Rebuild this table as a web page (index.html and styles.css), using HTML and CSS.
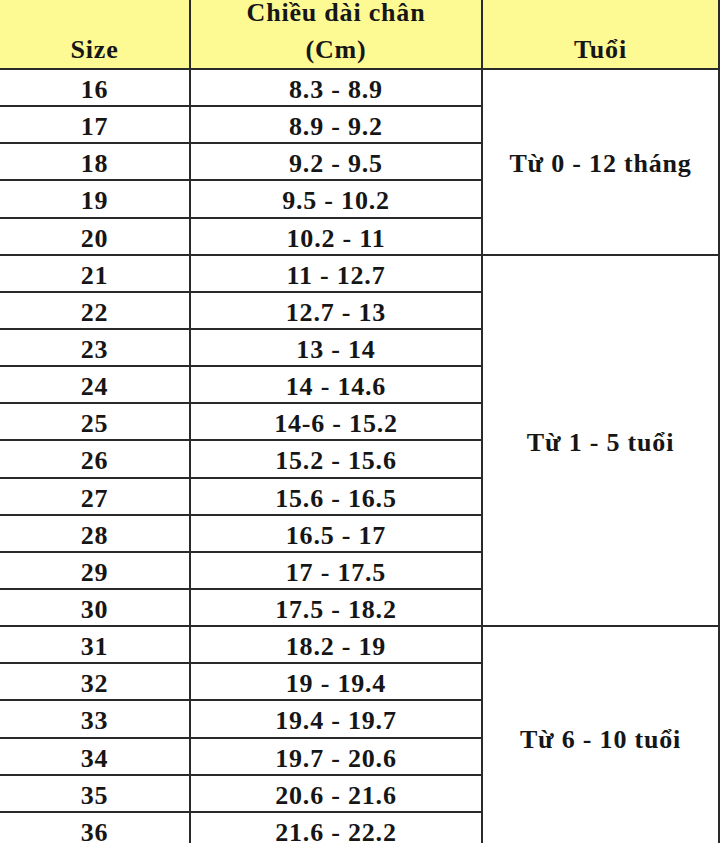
FILE: index.html
```html
<!DOCTYPE html>
<html lang="vi">
<head>
<meta charset="utf-8">
<link rel="stylesheet" href="styles.css">
</head>
<body>
<table class="size-table">
  <thead>
    <tr class="head-row">
      <th class="col-size">Size</th>
      <th class="col-len">Chiều dài chân<br>(Cm)</th>
      <th class="col-age">Tuổi</th>
    </tr>
  </thead>
  <tbody>
    <tr><td>16</td><td>8.3 - 8.9</td><td class="age" rowspan="5">Từ 0 - 12 tháng</td></tr>
    <tr><td>17</td><td>8.9 - 9.2</td></tr>
    <tr><td>18</td><td>9.2 - 9.5</td></tr>
    <tr><td>19</td><td>9.5 - 10.2</td></tr>
    <tr><td>20</td><td>10.2 - 11</td></tr>
    <tr><td>21</td><td>11 - 12.7</td><td class="age" rowspan="10">Từ 1 - 5 tuổi</td></tr>
    <tr><td>22</td><td>12.7 - 13</td></tr>
    <tr><td>23</td><td>13 - 14</td></tr>
    <tr><td>24</td><td>14 - 14.6</td></tr>
    <tr><td>25</td><td>14-6 - 15.2</td></tr>
    <tr><td>26</td><td>15.2 - 15.6</td></tr>
    <tr><td>27</td><td>15.6 - 16.5</td></tr>
    <tr><td>28</td><td>16.5 - 17</td></tr>
    <tr><td>29</td><td>17 - 17.5</td></tr>
    <tr><td>30</td><td>17.5 - 18.2</td></tr>
    <tr><td>31</td><td>18.2 - 19</td><td class="age" rowspan="6">Từ 6 - 10 tuổi</td></tr>
    <tr><td>32</td><td>19 - 19.4</td></tr>
    <tr><td>33</td><td>19.4 - 19.7</td></tr>
    <tr><td>34</td><td>19.7 - 20.6</td></tr>
    <tr><td>35</td><td>20.6 - 21.6</td></tr>
    <tr><td>36</td><td>21.6 - 22.2</td></tr>
  </tbody>
</table>
</body>
</html>
```
FILE: styles.css
```css
html, body {
  margin: 0;
  padding: 0;
  background: #ffffff;
  overflow: hidden;
}

.size-table {
  border-collapse: collapse;
  table-layout: fixed;
  width: 722px;
  margin: -8px 0 0 -2px;
  font-family: "Liberation Serif", "Times New Roman", serif;
  font-weight: bold;
  font-size: 26px;
  letter-spacing: 0.8px;
  color: #161616;
}

.size-table th,
.size-table td {
  border: 2px solid #2a2a2a;
  padding: 0;
  text-align: center;
}

.head-row {
  height: 75px;
}

.head-row th {
  background: #fdf993;
  vertical-align: bottom;
  line-height: 37px;
  padding-bottom: 0;
}

.col-size { width: 189px; }
.col-len { width: 290px; }
.col-age { width: auto; }

.size-table tbody tr {
  height: 37.15px;
}

.size-table tbody td {
  padding-top: 4px;
  line-height: 29px;
  vertical-align: middle;
}
```
